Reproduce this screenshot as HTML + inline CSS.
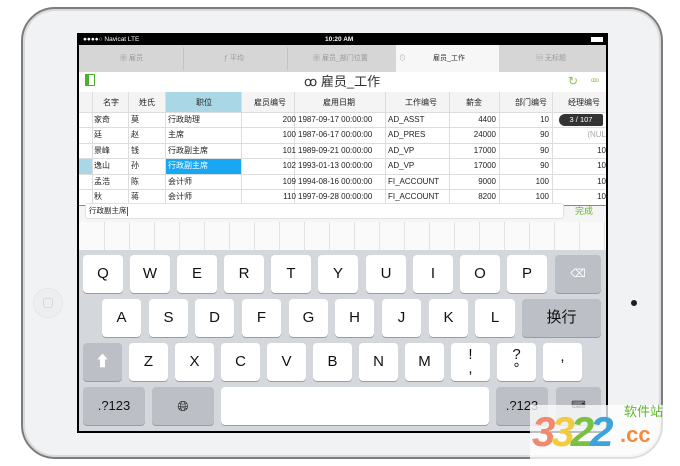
<!DOCTYPE html>
<html><head><meta charset="utf-8"><style>
*{margin:0;padding:0;box-sizing:border-box}
body{width:680px;height:466px;background:#fff;position:relative;overflow:hidden;font-family:"Liberation Sans","Noto Sans CJK SC",sans-serif}
.a{position:absolute}
.frame{left:21px;top:7px;width:642px;height:452px;border-radius:34px;background:#f1f2f4;border:2px solid #7c7c7e;box-shadow:inset 0 0 0 2px #d8d9db}
.scr{left:77px;top:33px;width:531px;height:400px;background:#000}
.t{font-size:8px;color:#222;white-space:nowrap;line-height:15px}
.key{position:absolute;background:#fff;border-radius:4px;box-shadow:0 1px 0 #9a9ca0;font-size:15px;color:#111;text-align:center;line-height:38px;height:38px}
.g{background:#bcc0c6}
.col{position:absolute;top:92px;height:114px;border-left:1px solid #ddd}
.row{position:absolute;left:79px;width:527px;height:1px;background:#ddd}
</style></head><body>
<div class="a frame"></div>
<div class="a" style="left:33px;top:288px;width:30px;height:30px;border-radius:50%;background:#eceef0;border:1px solid #e4e5e7"></div>
<div class="a" style="left:43px;top:298px;width:10px;height:10px;border-radius:3px;border:1px solid #d6d7d9"></div>
<div class="a" style="left:631px;top:300px;width:6px;height:6px;border-radius:50%;background:#1a1f2a"></div>
<div class="a scr"></div>
<div class="a" style="left:80px;top:34px;width:525px;height:11px;color:#fff;font-size:6.5px;line-height:11px">
<span style="position:absolute;left:3px">●●●●○ Navicat LTE</span>
<span style="position:absolute;left:245px;font-weight:bold">10:20 AM</span>
<span style="position:absolute;right:2px;top:3px;width:12px;height:5px;background:#fff"></span></div>
<div class="a" style="left:79px;top:45px;width:527px;height:27px;background:#d6d6d6"></div>
<div class="a" style="left:183px;top:47px;width:1px;height:23px;background:#c4c4c4"></div>
<div class="a" style="left:287px;top:47px;width:1px;height:23px;background:#c4c4c4"></div>
<div class="a" style="left:396px;top:45px;width:103px;height:27px;background:#f7f7f7"></div>
<div class="a t" style="left:120px;top:51px;color:#999;font-size:7px">▦ 雇员</div>
<div class="a t" style="left:224px;top:51px;color:#999;font-size:7px">ƒ 平均</div>
<div class="a t" style="left:313px;top:51px;color:#999;font-size:7px">▦ 雇员_部门位置</div>
<div class="a t" style="left:399px;top:51px;color:#aaa;font-size:7px">⊙</div>
<div class="a t" style="left:433px;top:51px;color:#333;font-size:7px">雇员_工作</div>
<div class="a t" style="left:536px;top:51px;color:#999;font-size:7px">▤ 无标题</div>
<div class="a" style="left:79px;top:72px;width:527px;height:20px;background:#fff"></div>
<div class="a" style="left:85px;top:74px;width:10px;height:12px;border:1.5px solid #4caf2a;border-left:4px solid #4caf2a"></div>
<div class="a" style="left:304px;top:72px;font-size:13px;line-height:20px;color:#333">ꝏ 雇员_工作</div>
<div class="a" style="left:568px;top:72px;font-size:12px;color:#8bc34a;line-height:18px">↻</div>
<div class="a" style="left:591px;top:72px;font-size:6px;color:#7cbb3c;line-height:18px;letter-spacing:-1px">ooo</div>
<div class="a" style="left:79px;top:92px;width:527px;height:114px;background:#fff"></div>
<div class="a" style="left:79px;top:92px;width:527px;height:20px;background:#f4f4f4"></div>
<div class="a" style="left:165px;top:92px;width:76px;height:20px;background:#a9d7e6"></div>
<div class="a" style="left:79px;top:159px;width:13px;height:15px;background:#a9d7e6"></div>
<div class="a" style="left:166px;top:159px;width:75px;height:15px;background:#18a7f3"></div>
<div class="col" style="left:92px"></div><div class="col" style="left:128px"></div><div class="col" style="left:165px"></div><div class="col" style="left:241px"></div><div class="col" style="left:294px"></div><div class="col" style="left:385px"></div><div class="col" style="left:449px"></div><div class="col" style="left:499px"></div><div class="col" style="left:552px"></div>
<div class="row" style="top:112px"></div><div class="row" style="top:127px"></div><div class="row" style="top:143px"></div><div class="row" style="top:158px"></div><div class="row" style="top:174px"></div><div class="row" style="top:189px"></div><div class="row" style="top:205px;background:#888"></div>
<div class="a t" style="left:103px;top:95px">名字</div><div class="a t" style="left:139px;top:95px">姓氏</div><div class="a t" style="left:196px;top:95px">职位</div><div class="a t" style="left:254px;top:95px">雇员编号</div><div class="a t" style="left:323px;top:95px">雇用日期</div><div class="a t" style="left:405px;top:95px">工作编号</div><div class="a t" style="left:466px;top:95px">薪金</div><div class="a t" style="left:515px;top:95px">部门编号</div><div class="a t" style="left:568px;top:95px">经理编号</div>
<div class="a t" style="left:94px;top:112px;line-height:15.4px">家奇<br>廷<br>景峰<br>逸山<br>孟浩<br>秋</div>
<div class="a t" style="left:131px;top:112px;line-height:15.4px">莫<br>赵<br>钱<br>孙<br>陈<br>蒋</div>
<div class="a t" style="left:168px;top:112px;line-height:15.4px">行政助理<br>主席<br>行政副主席<br><span style="color:#fff">行政副主席</span><br>会计师<br>会计师</div>
<div class="a t" style="left:241px;top:112px;width:55px;text-align:right;line-height:15.4px">200<br>100<br>101<br>102<br>109<br>110</div>
<div class="a t" style="left:298px;top:112px;line-height:15.4px">1987-09-17 00:00:00<br>1987-06-17 00:00:00<br>1989-09-21 00:00:00<br>1993-01-13 00:00:00<br>1994-08-16 00:00:00<br>1997-09-28 00:00:00</div>
<div class="a t" style="left:388px;top:112px;line-height:15.4px">AD_ASST<br>AD_PRES<br>AD_VP<br>AD_VP<br>FI_ACCOUNT<br>FI_ACCOUNT</div>
<div class="a t" style="left:449px;top:112px;width:47px;text-align:right;line-height:15.4px">4400<br>24000<br>17000<br>17000<br>9000<br>8200</div>
<div class="a t" style="left:499px;top:112px;width:50px;text-align:right;line-height:15.4px">10<br>90<br>90<br>90<br>100<br>100</div>
<div class="a t" style="left:552px;top:112px;width:54px;text-align:right;line-height:15.4px;overflow:hidden">&nbsp;<br><span style="color:#aaa">(NUL</span><br>10<br>10<br>10<br>10</div>
<div class="a" style="left:559px;top:114px;width:44px;height:12px;background:#333;border-radius:6px 2px 2px 6px;color:#fff;font-size:7.5px;line-height:12px;text-align:center">3 / 107</div>
<div class="a" style="left:79px;top:206px;width:527px;height:16px;background:#f5f5f5"></div>
<div class="a" style="left:85px;top:203px;width:479px;height:16px;background:#fff;border:1px solid #e2e2e2;border-radius:3px;font-size:7.5px;line-height:14px;padding-left:3px;color:#222">行政副主席<span style="display:inline-block;width:1px;height:9px;background:#2a5bd7;vertical-align:middle"></span></div>
<div class="a" style="left:575px;top:204px;font-size:9px;color:#5cb82b;line-height:14px">完成</div>
<div class="a" style="left:79px;top:222px;width:527px;height:28px;background:#fafafa;background-image:repeating-linear-gradient(90deg,transparent 0,transparent 24px,#e3e3e3 24px,#e3e3e3 25px);background-position:1px 0"></div>
<div class="a" style="left:79px;top:250px;width:527px;height:181px;background:#d4d7db"></div>
<div class="key" style="left:83px;top:255px;width:40px">Q</div><div class="key" style="left:130px;top:255px;width:40px">W</div><div class="key" style="left:177px;top:255px;width:40px">E</div><div class="key" style="left:224px;top:255px;width:40px">R</div><div class="key" style="left:271px;top:255px;width:40px">T</div><div class="key" style="left:318px;top:255px;width:40px">Y</div><div class="key" style="left:366px;top:255px;width:40px">U</div><div class="key" style="left:413px;top:255px;width:40px">I</div><div class="key" style="left:460px;top:255px;width:40px">O</div><div class="key" style="left:507px;top:255px;width:40px">P</div>
<div class="key g" style="left:555px;top:255px;width:46px;color:#fff;font-size:11px">⌫</div>
<div class="key" style="left:102px;top:299px;width:39px">A</div><div class="key" style="left:149px;top:299px;width:39px">S</div><div class="key" style="left:195px;top:299px;width:39px">D</div><div class="key" style="left:242px;top:299px;width:39px">F</div><div class="key" style="left:289px;top:299px;width:39px">G</div><div class="key" style="left:335px;top:299px;width:39px">H</div><div class="key" style="left:382px;top:299px;width:39px">J</div><div class="key" style="left:429px;top:299px;width:39px">K</div><div class="key" style="left:475px;top:299px;width:40px">L</div>
<div class="key g" style="left:522px;top:299px;width:79px">换行</div>
<div class="key g" style="left:83px;top:343px;width:39px;color:#fff">⬆</div>
<div class="key" style="left:129px;top:343px;width:39px">Z</div><div class="key" style="left:175px;top:343px;width:39px">X</div><div class="key" style="left:221px;top:343px;width:39px">C</div><div class="key" style="left:267px;top:343px;width:39px">V</div><div class="key" style="left:313px;top:343px;width:39px">B</div><div class="key" style="left:359px;top:343px;width:39px">N</div><div class="key" style="left:405px;top:343px;width:39px">M</div>
<div class="key" style="left:451px;top:343px;width:39px;line-height:14px;padding-top:5px">!<br>,</div><div class="key" style="left:497px;top:343px;width:39px;line-height:14px;padding-top:5px">?<br>°</div><div class="key" style="left:543px;top:343px;width:39px;line-height:28px">,</div>
<div class="key g" style="left:83px;top:387px;width:62px;font-size:13px">.?123</div>
<div class="key g" style="left:152px;top:387px;width:62px;font-size:14px">🌐︎</div>
<div class="key" style="left:221px;top:387px;width:268px"></div>
<div class="key g" style="left:496px;top:387px;width:52px;font-size:13px">.?123</div>
<div class="key g" style="left:556px;top:387px;width:45px;font-size:10px">⌨</div>
<div class="a" style="left:530px;top:405px;width:150px;height:58px;background:rgba(255,255,255,.75)"></div>
<div class="a" style="left:532px;top:408px;font-size:42px;font-weight:bold;font-style:italic;letter-spacing:-4px;line-height:48px"><span style="color:#ef8a6e">3</span><span style="color:#f2cc3f">3</span><span style="color:#7ac143">2</span><span style="color:#3ba4dc">2</span></div>
<div class="a" style="left:620px;top:420px;font-size:22px;font-weight:bold;color:#f48b3d;line-height:30px">.cc</div>
<div class="a" style="left:624px;top:404px;font-size:13px;color:#5cb82b;line-height:16px">软件站</div>
</body></html>
